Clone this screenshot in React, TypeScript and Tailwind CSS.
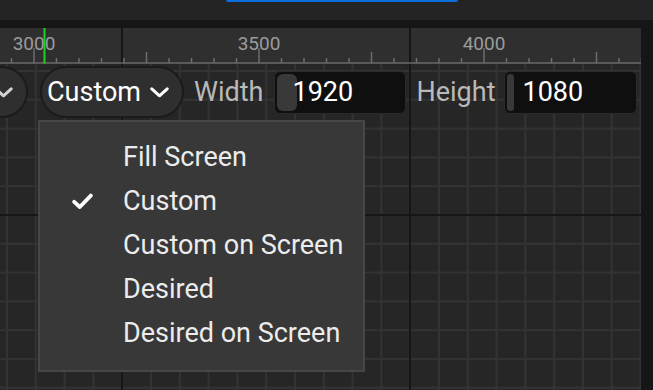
import React from "react";

const font = { fontFamily: "Roboto, 'Noto Sans', sans-serif" };

function Chevron({ color = "#ffffff" }: { color?: string }) {
  return (
    <svg width="19" height="11" viewBox="0 0 19 11" fill="none">
      <path d="M1.8 1.8 L9.5 8.8 L17.2 1.8" stroke={color} strokeWidth="3" strokeLinecap="round" strokeLinejoin="round" />
    </svg>
  );
}

function Check() {
  return (
    <svg width="21" height="17" viewBox="0 0 21 17" fill="none">
      <path d="M2.2 8.8 L7.8 14 L18.8 2.6" stroke="#ffffff" strokeWidth="3.8" strokeLinecap="round" strokeLinejoin="round" />
    </svg>
  );
}

function Ruler() {
  const ticks: React.ReactNode[] = [];
  for (let k = 0; k < 29; k++) {
    const x = 11.5 + 22.5 * k;
    const idx = k - 1; // 0 at x=34
    let top = 30;
    if (idx % 10 === 0) top = 20;
    else if (idx % 5 === 0) top = 24;
    ticks.push(<rect key={k} x={x - 0.75} y={top} width="1.5" height={35 - top} fill="#6c6c6c" />);
  }
  const labels = [
    { x: 34, t: "3000" },
    { x: 259, t: "3500" },
    { x: 484, t: "4000" },
  ];
  return (
    <svg width="641" height="36" viewBox="0 0 641 36" className="block">
      <rect x="0" y="0" width="641" height="36" fill="#2f2f2f" />
      <rect x="121" y="0" width="2" height="36" fill="#161616" />
      <rect x="409" y="0" width="2" height="36" fill="#161616" />
      {ticks}
      <rect x="0" y="34.3" width="641" height="1.4" fill="#6c6c6c" />
      {labels.map((l) => (
        <text key={l.t} x={l.x} y="22" textAnchor="middle" fontSize="19" fill="#9b9b9b" style={font}>
          {l.t}
        </text>
      ))}
      <rect x="43.5" y="0" width="2" height="35.5" fill="#1ed41e" />
    </svg>
  );
}

const items = ["Fill Screen", "Custom", "Custom on Screen", "Desired", "Desired on Screen"];

export default function App() {
  return (
    <div className="w-[653px] h-[390px] overflow-hidden bg-[#242424] flex flex-col" style={font}>
      <div className="h-[20px] shrink-0 bg-[#242424] flex pl-[226px]">
        <div className="w-[232px] h-[2px] rounded-b-[2px] bg-[#0b6edb]" />
      </div>
      <div className="h-[8px] shrink-0 bg-[#161616]" />
      <div className="flex flex-1">
        <div className="w-[641px] flex flex-col">
          <Ruler />
          <div className="relative h-[326px] bg-[#262626] [background-image:linear-gradient(to_right,transparent_121px,#161616_121px,#161616_123px,transparent_123px,transparent_409px,#161616_409px,#161616_411px,transparent_411px),linear-gradient(to_bottom,transparent_150px,#161616_150px,#161616_152px,transparent_152px),linear-gradient(to_right,#333333_2px,transparent_2px),linear-gradient(to_bottom,#333333_2px,transparent_2px)] [background-size:100%_100%,100%_100%,28.8px_28.8px,28.8px_28.8px] [background-position:0_0,0_0,6px_6px,6px_6px]">
            <div className="flex items-center h-[56px] text-[27px] leading-none">
              <div className="-ml-[32px] w-[60px] h-[52px] shrink-0 rounded-full bg-[#2f2f2f] border-2 border-[#1b1b1b] flex items-center justify-end pr-[13px]">
                <Chevron color="#d2d2d2" />
              </div>
              <div className="ml-[12px] w-[144px] h-[52px] shrink-0 rounded-full bg-[#2f2f2f] border-2 border-[#1b1b1b] flex items-center pl-[5px] pr-[13px] text-white">
                <span>Custom</span>
                <span className="ml-auto flex">
                  <Chevron />
                </span>
              </div>
              <span className="ml-[10px] text-[#b9b9b9]">Width</span>
              <div className="ml-[11px] relative w-[132px] h-[43px] shrink-0 rounded-[6px] bg-[#0f0f0f] border border-[#2a2a2a] flex items-center">
                <div className="absolute left-[2px] top-[2px] bottom-[2px] w-[20px] rounded-[6px] bg-[#393939]" />
                <span className="relative pl-[17px] text-white">1920</span>
              </div>
              <span className="ml-[10px] text-[#b9b9b9]">Height</span>
              <div className="ml-[9px] relative w-[133px] h-[43px] shrink-0 rounded-[6px] bg-[#0f0f0f] border border-[#2a2a2a] flex items-center">
                <div className="absolute left-[2px] top-[2px] bottom-[2px] w-[7px] rounded-[4px] bg-[#393939]" />
                <span className="relative pl-[17px] text-white">1080</span>
              </div>
            </div>
            <div className="absolute left-[38px] top-[56px] w-[327px] h-[252px] bg-[#383838] border-2 border-[#474747] py-[13px]">
              {items.map((t) => (
                <div key={t} className="h-[44px] flex items-center text-[27px] leading-none text-[#ececec]">
                  <div className="w-[83px] pl-[32px] flex items-center">{t === "Custom" ? <Check /> : null}</div>
                  <span>{t}</span>
                </div>
              ))}
            </div>
          </div>
        </div>
        <div className="w-[12px] bg-[#161616]" />
      </div>
    </div>
  );
}
